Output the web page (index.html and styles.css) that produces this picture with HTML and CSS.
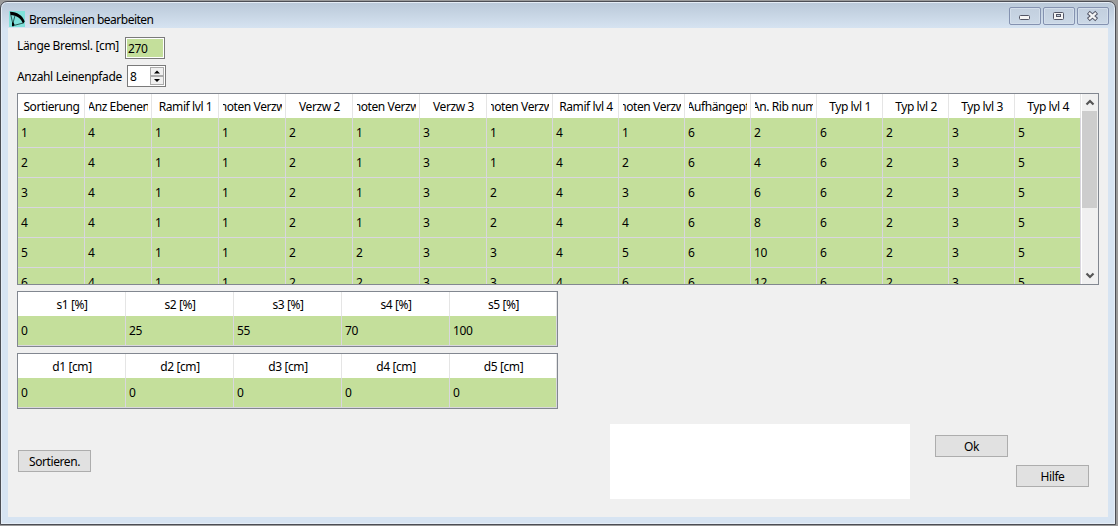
FILE: index.html
```html
<!DOCTYPE html>
<html lang="de">
<head>
<meta charset="utf-8">
<title>Bremsleinen bearbeiten</title>
<link rel="stylesheet" href="styles.css">
</head>
<body>
<div class="window">
  <header class="titlebar">
    <svg class="app-icon" width="16" height="16" viewBox="0 0 16 16">
      <rect width="16" height="16" fill="#7fe0da"/>
      <path d="M1 .8C7 .5 14 4.500 15.700 10.500L14 12.800C12.500 7.500 7.500 4.300 1.500 4Z" fill="#000"/>
      <path d="M1.700 3.500L4 13.500M14.200 12L4 14.700M6 4.500L4 12" fill="none" stroke="#123331" stroke-width=".8"/>
      <path d="M3 11.500h1.600l.8 2L4.500 15.200H3Z" fill="#000"/>
    </svg>
    <h1 class="title">Bremsleinen bearbeiten</h1>
    <div class="controls">
      <span class="control"><svg width="30" height="16" viewBox="0 0 30 16"><rect x="9.500" y="7.500" width="10" height="4" rx="1" fill="#f5f5f5" stroke="#535666"/></svg></span>
      <span class="control"><svg width="30" height="16" viewBox="0 0 30 16"><rect x="9.500" y="4.500" width="10" height="7" rx="1" fill="#f5f5f5" stroke="#535666"/><rect x="12.500" y="6.500" width="4" height="2" fill="#c5d2e0" stroke="#535666"/></svg></span>
      <span class="control"><svg width="30" height="16" viewBox="0 0 30 16"><path d="M10.300 4.300L18.700 11.700M18.700 4.300L10.300 11.700" stroke="#535666" stroke-width="4.200"/><path d="M11 4.900L18 11.100M18 4.900L11 11.100" stroke="#f5f5f5" stroke-width="2.300"/></svg></span>
    </div>
  </header>
  <main class="client">
    <div class="field field-length"><label class="label-length">Länge Bremsl. [cm]</label><span class="textbox">270</span></div>
    <div class="field field-count"><label class="label-count">Anzahl Leinenpfade</label>
      <span class="spinner"><span class="spin-value">8</span><span class="spin-buttons">
        <span class="spin"><svg width="12" height="7" viewBox="0 0 12 7"><path d="M3 5.500L6 2.500L9 5.500Z"/></svg></span>
        <span class="spin"><svg width="12" height="7" viewBox="0 0 12 7"><path d="M3 2L6 5L9 2Z"/></svg></span>
      </span></span>
    </div>
    <section class="grid-box lines-box">
      <div class="grid lines" id="lines"></div>
      <div class="scrollbar">
        <svg width="16" height="17" viewBox="0 0 16 17"><path d="M4.500 10.500L8 7L11.500 10.500" fill="none" stroke="#555" stroke-width="2.200"/></svg>
        <div class="thumb"></div>
        <svg class="down" width="16" height="17" viewBox="0 0 16 17"><path d="M4.500 6.500L8 10L11.500 6.500" fill="none" stroke="#555" stroke-width="2.200"/></svg>
      </div>
    </section>
    <section class="grid-box small-box"><div class="grid small" id="stretch"></div></section>
    <section class="grid-box small-box"><div class="grid small" id="delta"></div></section>
    <footer class="actions">
      <button class="button sort">Sortieren.</button>
      <div class="panel"></div>
      <button class="button ok">Ok</button>
      <button class="button help">Hilfe</button>
    </footer>
  </main>
</div>
<script src="script.js"></script>
</body>
</html>
```

FILE: styles.css
```css
* { box-sizing: border-box; }

body {
  margin: 0;
  height: 526px;
  overflow: hidden;
  background: #9b9b9b;
  padding: 1px 2px 1px 0;
  font: 12px/16px "Noto Sans", sans-serif;
  letter-spacing: -0.4px;
  color: #000;
}

.window {
  height: 524px;
  border: 1px solid #4c4e55;
  border-radius: 7px 7px 0 0;
  padding: 0 7px 7px;
  background: linear-gradient(#b9c8d8 0, #d7e4f2 27px);
  box-shadow: inset 0 0 0 1px #e5edf6;
}

.titlebar { display: flex; align-items: flex-start; height: 26px; }
.app-icon { margin: 9px 0 0 1px; }
.title { margin: 10px 0 0 4px; font: inherit; letter-spacing: -0.5px; white-space: nowrap; }
.controls { display: flex; gap: 2px; margin: 5px -1px 0 auto; }
.control {
  width: 32px;
  height: 18px;
  border: 1px solid #8492b0;
  border-radius: 2px;
  background: linear-gradient(#c2cfde, #cbd8e6);
  box-shadow: inset 0 0 0 1px #d3deeb;
}
.control svg { display: block; }

.client { height: 489px; background: #f0f0f0; padding: 9px 0 0 9px; }

.field { display: flex; align-items: flex-start; white-space: nowrap; }
.field-length { height: 28px; }
.label-length { width: 108px; padding-top: 1px; letter-spacing: -0.35px; }
.textbox {
  width: 40px;
  height: 22px;
  border: 1px solid #7a7a7a;
  box-shadow: inset 0 0 0 1px #fff;
  background: #c4df9b;
  padding: 3px 2px;
}
.field-count { height: 28px; }
.label-count { width: 110px; padding-top: 4px; letter-spacing: -0.35px; }
.spinner {
  display: flex;
  width: 39px;
  height: 22px;
  border: 1px solid #7a7a7a;
  background: #fff;
}
.spin-value { width: 22px; padding: 3px 2px; }
.spin-buttons { display: grid; grid-template-rows: 9px 9px; padding-top: 1px; }
.spin { width: 14px; border: 1px solid #acacac; background: #f0f0f0; }
.spin svg { display: block; }

.grid-box { border: 1px solid #828790; overflow: hidden; background: #fff; }
.lines-box { display: flex; width: 1082px; height: 192px; }
.small-box { width: 541px; height: 56px; margin-top: 6px; }
.grid { display: grid; align-content: start; }
.lines { grid-template-columns: repeat(7, 67px) repeat(9, 66px); grid-template-rows: 24px; grid-auto-rows: 30px; }
.small { grid-template-columns: repeat(4, 108px) 107px; grid-template-rows: 24px 30px; }

.head {
  display: flex;
  justify-content: center;
  align-items: center;
  margin-left: 4px;
  margin-right: 3px;
  overflow: hidden;
  white-space: nowrap;
  padding-top: 2px;
}
.head-cell { border-right: 1px solid #e5e5e5; overflow: hidden; display: grid; }
.cell {
  border-right: 1px solid #d9d6de;
  border-bottom: 1px solid #d9d6de;
  background: #c4df9b;
  padding: 7px 3px;
}

.scrollbar { width: 16px; margin-left: auto; background: #f0f0f0; display: flex; flex-direction: column; }
.scrollbar svg { display: block; flex: none; }
.thumb { height: 97px; margin: 0 1px 0 0; background: #cdcdcd; }
.down { margin-top: auto; }

.actions { display: flex; align-items: flex-start; padding-top: 15px; }
.button {
  width: 73px;
  height: 22px;
  border: 1px solid #adadad;
  background: #e1e1e1;
  padding: 1px 0 0;
  font: inherit;
  letter-spacing: inherit;
  color: inherit;
}
.sort { margin: 26px 0 0 1px; }
.panel { width: 300px; height: 75px; margin-left: 519px; background: #fff; }
.ok { margin: 11px 0 0 25px; }
.help { margin: 41px 0 0 8px; }
```

FILE: script.js
```js
function fillGrid(id, heads, rows) {
  const grid = document.getElementById(id);
  for (const text of heads) {
    const cell = document.createElement("div");
    cell.className = "head-cell";
    const label = document.createElement("div");
    label.className = "head";
    label.textContent = text;
    cell.append(label);
    grid.append(cell);
  }
  for (const value of rows.flat()) {
    const cell = document.createElement("div");
    cell.className = "cell";
    cell.textContent = value;
    grid.append(cell);
  }
}

fillGrid("lines",
  ["Sortierung", "Anz Ebenen", "Ramif lvl 1", "noten Verzw", "Verzw 2", "noten Verzw", "Verzw 3", "noten Verzw",
   "Ramif lvl 4", "noten Verzw", "Aufhängept", "An. Rib num", "Typ lvl 1", "Typ lvl 2", "Typ lvl 3", "Typ lvl 4"],
  [
    [1, 4, 1, 1, 2, 1, 3, 1, 4, 1, 6, 2, 6, 2, 3, 5],
    [2, 4, 1, 1, 2, 1, 3, 1, 4, 2, 6, 4, 6, 2, 3, 5],
    [3, 4, 1, 1, 2, 1, 3, 2, 4, 3, 6, 6, 6, 2, 3, 5],
    [4, 4, 1, 1, 2, 1, 3, 2, 4, 4, 6, 8, 6, 2, 3, 5],
    [5, 4, 1, 1, 2, 2, 3, 3, 4, 5, 6, 10, 6, 2, 3, 5],
    [6, 4, 1, 1, 2, 2, 3, 3, 4, 6, 6, 12, 6, 2, 3, 5]
  ]);
fillGrid("stretch", ["s1 [%]", "s2 [%]", "s3 [%]", "s4 [%]", "s5 [%]"], [[0, 25, 55, 70, 100]]);
fillGrid("delta", ["d1 [cm]", "d2 [cm]", "d3 [cm]", "d4 [cm]", "d5 [cm]"], [[0, 0, 0, 0, 0]]);
```
